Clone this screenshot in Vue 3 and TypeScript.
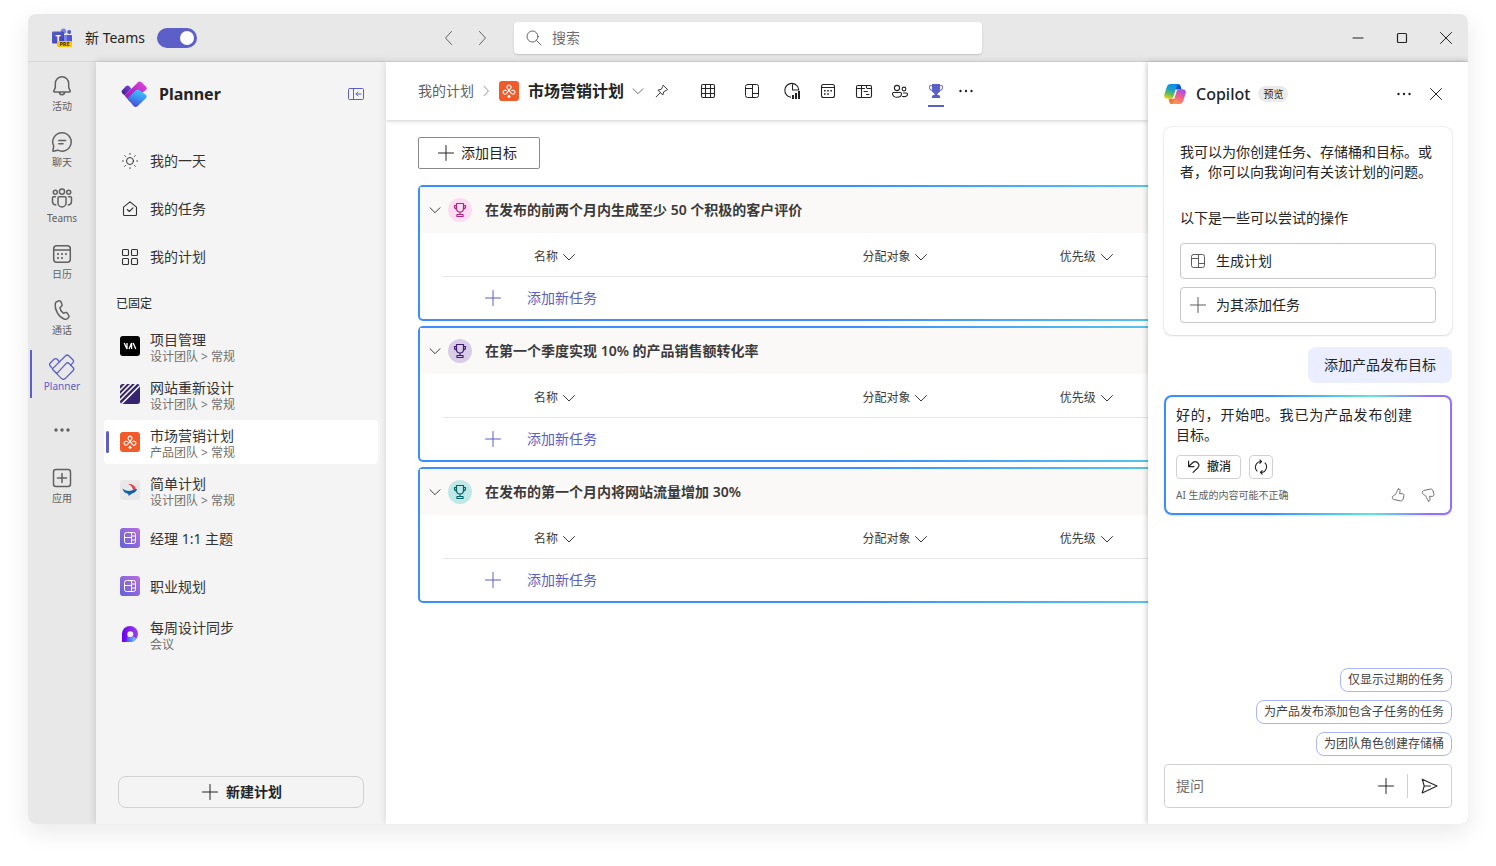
<script setup lang="ts">
import { h, ref } from 'vue'
import type { FunctionalComponent } from 'vue'

interface Glyph {
  box: string
  body: string
}

const line = (body: string, width = 1, box = '0 0 20 20'): Glyph => ({
  box,
  body: `<g fill="none" stroke="currentColor" stroke-width="${width}" stroke-linecap="round" stroke-linejoin="round">${body}</g>`,
})
const rail = (body: string): Glyph => line(body, 1.5, '0 0 24 24')
const art = (body: string, box = '0 0 20 20'): Glyph => ({ box, body })

const trophyCup = 'M6.5 3.5h7v5a3.5 3.5 0 0 1-7 0z'
const plannerBar = 'M3.6 14.6 16.6 1.7q1.6-1.4 3.2 0l4 4q1.6 1.6 0 3.2l-2.2 2.2'
const plannerBase = 'M8 19.4 17 9.6q1.6-1.6 3.2 0l3.8 3.9q1.6 1.6 0 3.2l-7.8 7.9q-1.8 1.6-3.6 0L3.6 15.6z'
const plannerLeaf = 'M3.6 14.6 1.3 12.2q-1.4-1.6 0-3.2L5 5.3q1.6-1.4 3.2 0l2.2 2.4'
const copilotRibbon =
  'M6.5 0H14c-1 .6-1.400 1.800-1.800 3.400L9.500 12.500c-.6 1.600-1.500 2.300-3 2.300H3.300C.8 14.800-.3 13 .3 10.500L2.800 3C3.400 1 4.700 0 6.500 0z'

const knot =
  '<path d="M7.400 12.700 11.600 7.400A2 2 0 1 0 8.400 7.400L12.600 12.700A2 2 0 1 0 13.800 9.200L12.800 9.600M7.400 12.700A2 2 0 1 1 6.200 9.200L7.200 9.600" fill="none" stroke="#fff" stroke-width="1.100" stroke-linejoin="round" stroke-linecap="round"/><path d="M10 13.600l1.800 1.800L10 17.200l-1.800-1.800z" fill="#fff"/>'

const glyphs: Record<string, Glyph> = {
  bell: rail('<path d="M12 2.800a6.700 6.700 0 0 0-6.700 6.700v4.200l-1.500 3.100a.8.8 0 0 0 .7 1.200h15a.8.8 0 0 0 .7-1.200l-1.500-3.100V9.500A6.700 6.700 0 0 0 12 2.800zM9.500 18.300a2.500 2.500 0 0 0 5 0"/>'),
  chat: rail('<path d="M12 2.800a9.200 9.200 0 1 1-4.200 17.400l-4.600 1a.4.4 0 0 1-.4-.5l1-4.500A9.200 9.200 0 0 1 12 2.800zM8.800 10.500h6.800M8.800 13.800h4.200"/>'),
  teams: rail('<circle cx="12" cy="5.600" r="2.600"/><circle cx="5.300" cy="6.200" r="2"/><circle cx="18.700" cy="6.200" r="2"/><path d="M9 10.800h6a1 1 0 0 1 1 1V17a4 4 0 0 1-8 0v-5.200a1 1 0 0 1 1-1zM5.500 10.800h-2a1 1 0 0 0-1 1V15.500a3.500 3.500 0 0 0 3.300 3.400M18.500 10.800h2a1 1 0 0 1 1 1V15.500a3.500 3.500 0 0 1-3.300 3.400"/>'),
  calendar: {
    box: '0 0 24 24',
    body: '<g fill="none" stroke="currentColor" stroke-width="1.500"><rect x="3.700" y="3.700" width="16.600" height="16.600" rx="3"/><path d="M3.700 7.900h16.600"/></g><g fill="currentColor"><circle cx="8" cy="12" r="1.100"/><circle cx="12" cy="12" r="1.100"/><circle cx="16" cy="12" r="1.100"/><circle cx="8" cy="16" r="1.100"/><circle cx="12" cy="16" r="1.100"/></g>',
  },
  phone: rail('<path d="M7.700 3.200l1-.3c1-.3 2 .2 2.400 1.200l.8 1.900c.4.800.2 1.800-.5 2.400L9.900 9.700c.2 1.900 1.600 4.300 3.400 5.500l1.800-.6c.9-.3 1.800 0 2.300.8l1.200 1.700c.6.800.5 1.900-.2 2.600l-.8.800c-.9.800-2.100 1-3.200.700C8.800 19.300 4.600 12.200 5.200 6c.1-1.300 1.200-2.400 2.500-2.800z"/>'),
  planner: line(`<path d="${plannerBar}"/><path d="${plannerBase}"/><path d="${plannerLeaf}"/>`, 1.3, '0 0 26 26'),
  dots: art('<g fill="currentColor"><circle cx="6" cy="12" r="1.700"/><circle cx="12" cy="12" r="1.700"/><circle cx="18" cy="12" r="1.700"/></g>', '0 0 24 24'),
  apps: rail('<rect x="3.500" y="3.500" width="17" height="17" rx="2.500"/><path d="M12 7.500v9M7.500 12h9"/>'),
  more: art('<g fill="currentColor"><circle cx="4.500" cy="10" r="1.200"/><circle cx="10" cy="10" r="1.200"/><circle cx="15.500" cy="10" r="1.200"/></g>'),
  sun: line('<circle cx="10" cy="10" r="3.500"/><path d="M10 2.500v.8M10 16.700v.8M2.500 10h.8M16.700 10h.8M4.700 4.700l.8.8M14.500 14.500l.8.8M4.700 15.300l.8-.8M14.500 5.500l.8-.8"/>'),
  home: line('<path d="M3.500 8.200 10 2.800l6.500 5.400v7.300a1 1 0 0 1-1 1h-11a1 1 0 0 1-1-1zM7.300 10.500l2 2 3.700-3.700"/>', 1.1),
  squares: line('<rect x="2.500" y="2.500" width="6" height="6" rx="1"/><rect x="11.500" y="2.500" width="6" height="6" rx="1"/><rect x="2.500" y="11.500" width="6" height="6" rx="1"/><rect x="11.500" y="11.500" width="6" height="6" rx="1"/>', 1.1),
  collapse: line('<rect x="2.500" y="4.500" width="15" height="11" rx="1"/><path d="M7.500 4.500v11M15 10h-5M12 8l-2 2 2 2"/>'),
  plus: line('<path d="M10 2.500v15M2.500 10h15"/>'),
  down: line('<path d="M4.500 7.500 10 13l5.500-5.500"/>'),
  left: line('<path d="M12.500 3.500 6.500 10l6 6.500"/>'),
  right: line('<path d="M7.500 3.500l6 6.500-6 6.500"/>'),
  search: line('<circle cx="8.500" cy="8.500" r="5.500"/><path d="M12.500 12.500l4.500 4.500"/>'),
  pin: line('<path d="M11.600 3.800l4.600 4.600-1.700 1-2.600 1.500-1 3.600-5.400-5.400 3.600-1 1.500-2.600zM8 12l-4.500 4.500"/>'),
  grid: line('<rect x="3.500" y="3.500" width="13" height="13" rx="1.500"/><path d="M7.500 3.500v13M12.500 3.500v13M3.500 7.500h13M3.500 12.500h13"/>', 1.1),
  board: line('<rect x="3.500" y="3.500" width="13" height="13" rx="2"/><path d="M10.500 3.500v13M3.500 7.500h7M10.500 12.500h6"/>'),
  chart: art('<path d="M9 16.300A7 7 0 1 1 16.800 9H10.500V2.500" fill="none" stroke="currentColor" stroke-width="1.100"/><path d="M10 14h2v4h-2zM13 12h2v6h-2zM16 10h2v8h-2z" fill="currentColor"/>'),
  schedule: art('<rect x="3.500" y="3.500" width="13" height="13" rx="2" fill="none" stroke="currentColor" stroke-width="1.100"/><path d="M3.500 6.500h13" stroke="currentColor"/><path d="M6 9h1.600v1.600H6zM9.200 9h1.600v1.600H9.200zM12.400 9H14v1.600h-1.600zM6 12.200h1.600v1.600H6zM9.200 12.200h1.600v1.600H9.200z" fill="currentColor"/>'),
  timeline: line('<rect x="2.500" y="4.500" width="15" height="12" rx="1.500"/><path d="M7.500 4.500v12M2.500 7.500h8M13 7.500h4.500M10 10.500h3.500M12.500 13.500H15M12.500 4.500v2"/>', 1.1),
  people: line('<circle cx="7" cy="7" r="2.600"/><circle cx="14" cy="8" r="1.900"/><path d="M3.500 11.500h7a1 1 0 0 1 1 1c0 2.500-2 3.800-4.500 3.800s-4.500-1.300-4.500-3.800a1 1 0 0 1 1-1zM13.500 12h3a1 1 0 0 1 1 1c0 1.800-1.500 2.600-3.500 2.600-.6 0-1-.1-1.500-.2"/>', 1.1),
  trophyFill: art('<path d="M6 3h8v7.500l-2.500 2.200V14h1a1.500 1.500 0 0 1 1.500 1.500V17H6v-1.500A1.500 1.500 0 0 1 7.500 14h1v-1.300L6 10.500z" fill="currentColor"/><path d="M6 4.700H4a.5.5 0 0 0-.5.500v1.500A2.700 2.700 0 0 0 6.500 9.400M14 4.700h2a.5.5 0 0 1 .5.500v1.500a2.700 2.700 0 0 1-3 2.700" fill="none" stroke="currentColor"/>'),
  trophy: line(`<path d="${trophyCup}M6.500 5.500h-2v1a2.500 2.500 0 0 0 2.200 2.500M13.500 5.500h2v1A2.500 2.500 0 0 1 13.300 9M10 12v2.500M7 14.500h6v2H7z"/>`, 1.2),
  close: line('<path d="M4.500 4.500l11 11M15.500 4.500l-11 11"/>'),
  minimize: line('<path d="M5 10h10"/>'),
  maximize: line('<rect x="5.500" y="5.500" width="9" height="9" rx="1"/>', 1.2),
  undo: line('<path d="M4 3.500v6h6M4.300 9.200 8.500 5.300a4 4 0 0 1 5.800 5.500L9 16"/>', 1.3),
  refresh: line('<path d="M10.500 4A6.200 6.200 0 0 0 5.600 14.500M9.500 16A6.200 6.200 0 0 0 14.400 5.500M8.700 2l2 2-2 2M11.300 14l-2 2 2 2"/>', 1.2),
  thumbUp: line('<path d="M10.400 3.300c.9-.3 1.900.3 1.900 1.600 0 1.300-.3 2.400-.6 3.600h3.200c1.200 0 2 1.100 1.700 2.200l-1 4c-.4 1.400-1.700 2.200-3.100 1.800L5 14.900a1.500 1.500 0 0 1-1.100-1.200l-.2-.9a1.500 1.500 0 0 1 .9-1.700C7 10 8.400 8 9.200 5.200c.3-1 .5-1.700 1.200-1.900z"/>'),
  thumbDown: line('<path d="M10.400 16.700c.9.300 1.900-.3 1.900-1.600 0-1.300-.3-2.400-.6-3.600h3.200c1.200 0 2-1.100 1.700-2.200l-1-4c-.4-1.400-1.700-2.200-3.100-1.800L5 5.100a1.500 1.500 0 0 0-1.100 1.200l-.2.900a1.500 1.500 0 0 0 .9 1.700C7 10 8.400 12 9.200 14.800c.3 1 .5 1.700 1.200 1.900z"/>'),
  send: line('<path d="M3.200 3.200 18 10 3.200 17l2-7zM5.200 10h6.300"/>', 1.1),
  plannerLogo: art(
    '<defs><linearGradient id="pl-a" x1="0" y1="1" x2="1" y2="0"><stop offset="0" stop-color="#8a1bb4"/><stop offset=".5" stop-color="#b92bc4"/><stop offset="1" stop-color="#e549e0"/></linearGradient><linearGradient id="pl-b" x1=".7" y1="0" x2=".3" y2="1"><stop offset="0" stop-color="#3ccbfb"/><stop offset=".5" stop-color="#3b8ff0"/><stop offset="1" stop-color="#4a3fd6"/></linearGradient><linearGradient id="pl-c" x1="0" y1="1" x2="1" y2="0"><stop offset="0" stop-color="#3b1a86"/><stop offset="1" stop-color="#8646d9"/></linearGradient></defs>' +
      `<path d="${plannerLeaf}z" fill="url(#pl-c)"/><path d="M3.600 14.600 17 1.200q1.800-1.500 3.500 0l4.400 4.200q1.600 1.800 0 3.600L9 21z" fill="url(#pl-a)"/><path d="M6.400 17.600 15 9.200q1.800-1.600 3.500 0l6.400 4.600q1.600 1.600 0 3.400l-8.500 8q-1.800 1.600-3.600 0z" fill="url(#pl-b)"/>`,
    '0 0 26 26',
  ),
  teamsLogo: art(
    '<defs><linearGradient id="tm-a" x1="0" y1="0" x2="1" y2="1"><stop offset="0" stop-color="#5a62c9"/><stop offset="1" stop-color="#3940ab"/></linearGradient></defs><circle cx="11.500" cy="3.200" r="2.700" fill="#7b83eb"/><circle cx="17.200" cy="4" r="2" fill="#5059c9"/><path d="M13 7h6.200a.8.8 0 0 1 .8.8V14h-7z" fill="#5059c9"/><path d="M8 7h7v9H8z" fill="#7b83eb"/><rect x="0" y="3.500" width="12" height="12" rx="1" fill="url(#tm-a)"/><text x="6" y="12.500" text-anchor="middle" font-family="Noto Sans, sans-serif" font-weight="700" font-size="9" fill="#fff">T</text><rect x="5" y="13" width="15" height="6" rx="1" fill="#ffc30b"/><text x="12.500" y="18" text-anchor="middle" font-family="Noto Sans, sans-serif" font-weight="700" font-size="5.500" fill="#3b2f00">PRE</text>',
  ),
  copilotLogo: art(
    '<defs><linearGradient id="cp-a" x1=".6" y1="0" x2=".3" y2="1"><stop offset="0" stop-color="#0c8ff0"/><stop offset=".4" stop-color="#1ca4c0"/><stop offset=".7" stop-color="#6cc04a"/><stop offset="1" stop-color="#f5d020"/></linearGradient><linearGradient id="cp-b" x1=".3" y1="1" x2=".7" y2="0"><stop offset="0" stop-color="#a04ff0"/><stop offset=".5" stop-color="#f0608c"/><stop offset="1" stop-color="#fc9a50"/></linearGradient><linearGradient id="cp-c" x1="0" y1="0" x2="1" y2="1"><stop offset="0" stop-color="#1a6ee0"/><stop offset="1" stop-color="#0a3fb8"/></linearGradient></defs>' +
      `<path d="M11 0h3c1.600 0 2.300 1 2.800 2.600L17.600 5.500H11z" fill="url(#cp-c)"/><path d="${copilotRibbon}" fill="url(#cp-a)"/><path d="M11 20H8c-1.600 0-2.300-1-2.800-2.600L4.600 14.800H11z" fill="#f07a3a"/><path d="${copilotRibbon}" fill="url(#cp-b)" transform="rotate(180 11 10)"/>`,
    '0 0 22 20',
  ),
  projects: art('<rect width="20" height="20" rx="3" fill="#000"/><path d="M4.200 7 7 13V7M9 13l2.600-6v6M13.200 7l2.600 6" fill="none" stroke="#fff" stroke-width="1.300"/>'),
  website: art('<defs><clipPath id="ws"><rect width="20" height="20" rx="3"/></clipPath></defs><g clip-path="url(#ws)"><rect width="20" height="20" fill="#36246e"/><path d="M-1 7 7-1M-1 12 12-1M-1 17 17-1M-1 22.500 22.500-1" stroke="#fff" stroke-width="1.500"/></g>'),
  marketing: art(`<rect width="20" height="20" rx="3" fill="#f25a29"/>${knot}`),
  simple: art('<rect width="20" height="20" rx="3" fill="#e8e8e8"/><path d="M2.500 8.500c2 1.800 5 2.800 8 2.300 2-.3 3.300-1 4.500-1.800h2c-.4 2.400-2.400 3.600-4.500 4.200l-3.700 2.600c-.8-.3-.5-1-.2-1.800C5.500 13.500 3 11.500 2.500 8.500z" fill="#0e5fa8"/><path d="M8.300 4c3.700-.2 7 1.500 7.500 4.900l-2.800 1.300c-.3-2.800-2-4.700-4.700-6.200z" fill="#ee3e4b"/>'),
  topic: art('<defs><linearGradient id="tp" x1="1" y1="0" x2="0" y2="1"><stop offset="0" stop-color="#b96ede"/><stop offset="1" stop-color="#5f63d8"/></linearGradient></defs><rect width="20" height="20" rx="3" fill="url(#tp)"/><g fill="none" stroke="#fff"><rect x="4.500" y="4.500" width="11" height="11" rx="2"/><path d="M11.500 4.500v11M4.500 9.500h7M11.500 8h4M11.500 12h4"/></g>'),
  loop: art('<defs><linearGradient id="lp" x1="0" y1="0" x2="1" y2="0"><stop offset="0" stop-color="#6a00f0"/><stop offset="1" stop-color="#9a45e6"/></linearGradient><linearGradient id="lq" x1="0" y1="0" x2="1" y2="0"><stop offset="0" stop-color="#5a3cf5"/><stop offset="1" stop-color="#5ee0fb"/></linearGradient></defs><path d="M10 2a8 8 0 0 1 8 8 8 8 0 0 1-8 8H2v-8a8 8 0 0 1 8-8z" fill="url(#lp)"/><path d="M7.500 11.500c.5 1.500 1.500 2 3 2 1.500 0 2.500-.4 3.200-1l2.600 2.500A8 8 0 0 1 10 18H6z" fill="url(#lq)"/><circle cx="10.300" cy="10.300" r="3" fill="#f4f4f4"/>'),
}

const Icon: FunctionalComponent<{ name: string; size?: number }> = (props) => {
  const g = glyphs[props.name]
  const size = props.size ?? 20
  return h('svg', {
    class: 'icon',
    viewBox: g.box,
    width: size,
    height: size,
    'aria-hidden': 'true',
    innerHTML: g.body,
  })
}
Icon.props = ['name', 'size']

const newTeams = ref(true)
const query = ref('')
const prompt = ref('')

const railItems = [
  { icon: 'bell', label: '活动' },
  { icon: 'chat', label: '聊天' },
  { icon: 'teams', label: 'Teams' },
  { icon: 'calendar', label: '日历' },
  { icon: 'phone', label: '通话' },
  { icon: 'planner', label: 'Planner', active: true },
  { icon: 'dots', label: '' },
  { icon: 'apps', label: '应用' },
]

const shortcuts = [
  { icon: 'sun', label: '我的一天' },
  { icon: 'home', label: '我的任务' },
  { icon: 'squares', label: '我的计划' },
]

const pinned = [
  { icon: 'projects', title: '项目管理', sub: '设计团队 > 常规' },
  { icon: 'website', title: '网站重新设计', sub: '设计团队 > 常规' },
  { icon: 'marketing', title: '市场营销计划', sub: '产品团队 > 常规', active: true },
  { icon: 'simple', title: '简单计划', sub: '设计团队 > 常规' },
  { icon: 'topic', title: '经理 1:1 主题' },
  { icon: 'topic', title: '职业规划' },
  { icon: 'loop', title: '每周设计同步', sub: '会议' },
]

const views = [
  { icon: 'grid', label: '网格' },
  { icon: 'board', label: '板' },
  { icon: 'chart', label: '图表' },
  { icon: 'schedule', label: '日程' },
  { icon: 'timeline', label: '时间线' },
  { icon: 'people', label: '人员' },
  { icon: 'trophyFill', label: '目标', active: true },
]

const columns = ['名称', '分配对象', '优先级']

const goals = [
  { title: '在发布的前两个月内生成至少 50 个积极的客户评价', tone: 'pink' },
  { title: '在第一个季度实现 10% 的产品销售额转化率', tone: 'violet' },
  { title: '在发布的第一个月内将网站流量增加 30%', tone: 'teal' },
]

const suggestions = ['仅显示过期的任务', '为产品发布添加包含子任务的任务', '为团队角色创建存储桶']
</script>

<template>
  <div class="desktop">
    <div class="window">
      <header class="titlebar">
        <div class="title-left">
          <Icon name="teamsLogo" />
          <label class="switch-label">
            <span>新 Teams</span>
            <input v-model="newTeams" type="checkbox" role="switch" class="switch" />
          </label>
          <div class="history">
            <button type="button" aria-label="后退"><Icon name="left" /></button>
            <button type="button" aria-label="前进"><Icon name="right" /></button>
          </div>
        </div>
        <label class="search">
          <Icon name="search" />
          <input v-model="query" type="search" placeholder="搜索" aria-label="搜索" />
        </label>
        <div class="window-buttons">
          <button type="button" aria-label="最小化"><Icon name="minimize" /></button>
          <button type="button" aria-label="最大化"><Icon name="maximize" /></button>
          <button type="button" aria-label="关闭"><Icon name="close" /></button>
        </div>
      </header>

      <div class="body">
        <nav class="rail" aria-label="应用">
          <button
            v-for="item in railItems"
            :key="item.icon"
            type="button"
            class="rail-item"
            :class="{ active: item.active, compact: !item.label }"
            :aria-label="item.label || '更多'"
          >
            <Icon :name="item.icon" :size="item.active ? 26 : 24" />
            <span v-if="item.label">{{ item.label }}</span>
          </button>
        </nav>

        <aside class="sidebar">
          <div class="side-head">
            <Icon name="plannerLogo" :size="26" />
            <h1>Planner</h1>
            <button type="button" class="collapse" aria-label="折叠"><Icon name="collapse" /></button>
          </div>
          <ul class="shortcuts">
            <li v-for="s in shortcuts" :key="s.label">
              <button type="button" class="side-item"><Icon :name="s.icon" />{{ s.label }}</button>
            </li>
          </ul>
          <h2>已固定</h2>
          <ul class="pinned">
            <li v-for="p in pinned" :key="p.title">
              <button type="button" class="side-item" :class="{ active: p.active }">
                <Icon :name="p.icon" />
                <span class="side-text" :class="{ double: p.sub }">
                  <span class="side-title">{{ p.title }}</span>
                  <span v-if="p.sub" class="side-sub">{{ p.sub }}</span>
                </span>
              </button>
            </li>
          </ul>
          <button type="button" class="new-plan"><Icon name="plus" />新建计划</button>
        </aside>

        <main class="main">
          <div class="plan-bar">
            <a href="#" class="crumb">我的计划</a>
            <Icon name="right" :size="14" class="crumb-sep" />
            <Icon name="marketing" />
            <h2>市场营销计划</h2>
            <button type="button" class="bare menu" aria-label="计划菜单"><Icon name="down" :size="18" /></button>
            <button type="button" class="bare" aria-label="固定"><Icon name="pin" :size="18" /></button>
            <div class="views">
              <button
                v-for="v in views"
                :key="v.icon"
                type="button"
                class="view"
                :class="{ active: v.active }"
                :aria-label="v.label"
              >
                <Icon :name="v.icon" />
              </button>
              <button type="button" class="bare" aria-label="更多"><Icon name="more" /></button>
            </div>
          </div>

          <div class="content">
            <button type="button" class="add-goal"><Icon name="plus" />添加目标</button>
            <div class="goals">
              <section v-for="goal in goals" :key="goal.title" class="goal">
                <div class="goal-head">
                  <button type="button" class="bare" aria-label="折叠目标"><Icon name="down" :size="18" /></button>
                  <span class="badge" :class="goal.tone"><Icon name="trophy" /></span>
                  <h3>{{ goal.title }}</h3>
                </div>
                <table>
                  <thead>
                    <tr>
                      <th v-for="c in columns" :key="c" scope="col">
                        <button type="button">{{ c }}<Icon name="down" /></button>
                      </th>
                    </tr>
                  </thead>
                  <tbody>
                    <tr>
                      <td colspan="3">
                        <button type="button" class="add-task"><Icon name="plus" />添加新任务</button>
                      </td>
                    </tr>
                  </tbody>
                </table>
              </section>
            </div>
          </div>
        </main>

        <aside class="copilot">
          <div class="cp-head">
            <Icon name="copilotLogo" :size="22" />
            <h2>Copilot</h2>
            <span class="tag">预览</span>
            <div class="cp-actions">
              <button type="button" aria-label="更多"><Icon name="more" /></button>
              <button type="button" aria-label="关闭"><Icon name="close" /></button>
            </div>
          </div>
          <div class="chat">
            <div class="intro">
              <p>我可以为你创建任务、存储桶和目标。或者，你可以向我询问有关该计划的问题。</p>
              <p class="hint">以下是一些可以尝试的操作</p>
              <button type="button" class="option"><Icon name="board" />生成计划</button>
              <button type="button" class="option"><Icon name="plus" />为其添加任务</button>
            </div>
            <p class="mine">添加产品发布目标</p>
            <div class="answer">
              <p>好的，开始吧。我已为产品发布创建目标。</p>
              <div class="answer-actions">
                <button type="button" class="undo"><Icon name="undo" :size="18" />撤消</button>
                <button type="button" class="redo" aria-label="重新生成"><Icon name="refresh" :size="18" /></button>
              </div>
              <div class="answer-foot">
                <small>AI 生成的内容可能不正确</small>
                <button type="button" class="bare" aria-label="喜欢"><Icon name="thumbUp" :size="18" /></button>
                <button type="button" class="bare" aria-label="不喜欢"><Icon name="thumbDown" :size="18" /></button>
              </div>
            </div>
          </div>
          <div class="chips">
            <button v-for="s in suggestions" :key="s" type="button">{{ s }}</button>
          </div>
          <form class="ask" @submit.prevent>
            <input v-model="prompt" type="text" placeholder="提问" aria-label="提问" />
            <button type="button" aria-label="添加"><Icon name="plus" /></button>
            <button type="submit" class="send" aria-label="发送"><Icon name="send" /></button>
          </form>
        </aside>
      </div>
    </div>
  </div>
</template>

<style>
body {
  background: #fff;
}
</style>

<style scoped>
* {
  box-sizing: border-box;
}
.desktop {
  display: flex;
  min-height: 100vh;
  padding: 14px 28px 42px;
  font-family: 'Noto Sans', 'Noto Sans CJK SC', sans-serif;
  font-size: 14px;
  line-height: 20px;
  color: #242424;
}
h1,
h2,
h3,
p,
ul {
  margin: 0;
  padding: 0;
  list-style: none;
}
button,
input {
  margin: 0;
  padding: 0;
  border: 0;
  background: none;
  font: inherit;
  color: inherit;
}
button {
  display: flex;
  align-items: center;
  justify-content: center;
  white-space: nowrap;
}
.icon {
  display: block;
  flex: none;
}
.window {
  flex: 1;
  min-width: 0;
  display: flex;
  flex-direction: column;
  overflow: hidden;
  border-radius: 8px;
  box-shadow: 0 8px 24px rgba(0, 0, 0, 0.09);
}

.titlebar {
  display: grid;
  grid-template-columns: 1fr minmax(0, 468px) 1fr;
  align-items: center;
  height: 48px;
  background: #e8e8e8;
  border-bottom: 1px solid #d6d6d6;
}
.title-left {
  display: flex;
  align-items: center;
  padding: 0 16px 0 24px;
}
.switch-label {
  display: flex;
  align-items: center;
  gap: 12px;
  margin-left: 13px;
}
.switch {
  appearance: none;
  display: flex;
  align-items: center;
  justify-content: flex-end;
  width: 40px;
  height: 20px;
  padding: 0 3px;
  border-radius: 10px;
  background: #5b5fc7;
}
.switch::before {
  content: '';
  width: 14px;
  height: 14px;
  border-radius: 50%;
  background: #fff;
}
.switch:not(:checked) {
  justify-content: flex-start;
  background: #8a8a8a;
}
.history {
  display: flex;
  margin-left: auto;
  color: #616161;
}
.history button {
  width: 33px;
  height: 32px;
}
.search {
  display: flex;
  align-items: center;
  gap: 8px;
  height: 32px;
  padding: 0 10px;
  border-radius: 4px;
  background: #fff;
  box-shadow: 0 1px 2px rgba(0, 0, 0, 0.16);
  color: #616161;
}
.search input {
  flex: 1;
  min-width: 0;
  outline: 0;
}
input::placeholder {
  color: #707070;
  opacity: 1;
}
.window-buttons {
  display: flex;
  justify-content: flex-end;
}
.window-buttons button {
  width: 44px;
  height: 44px;
}

.body {
  flex: 1;
  display: flex;
  min-height: 0;
}
.rail {
  flex: none;
  width: 68px;
  padding-top: 6px;
  background: #e8e8e8;
  color: #616161;
}
.rail-item {
  position: relative;
  flex-direction: column;
  justify-content: flex-start;
  gap: 2px;
  width: 100%;
  height: 56px;
  padding-top: 6px;
  font-size: 10px;
  line-height: 12px;
}
.rail-item.compact {
  padding-top: 14px;
}
.rail-item.active {
  gap: 0;
  color: #5b5fc7;
}
.rail-item.active::before {
  content: '';
  position: absolute;
  left: 2px;
  top: 2px;
  width: 2px;
  height: 48px;
  background: #5b5fc7;
}

.sidebar {
  flex: none;
  z-index: 1;
  display: flex;
  flex-direction: column;
  width: 290px;
  padding: 16px 8px;
  background: #f4f4f4;
  box-shadow: 0 0 8px rgba(0, 0, 0, 0.16);
}
.side-head {
  display: flex;
  align-items: center;
  height: 32px;
  padding: 0 12px 0 17px;
}
.side-head h1 {
  margin-left: 12px;
  font-size: 16px;
  font-weight: 700;
}
.collapse {
  margin-left: auto;
  color: #5b5fc7;
}
.shortcuts {
  padding-top: 29px;
}
.shortcuts li,
.pinned li {
  padding-bottom: 4px;
}
.side-item {
  position: relative;
  justify-content: flex-start;
  gap: 10px;
  width: 100%;
  height: 44px;
  padding-left: 16px;
  border-radius: 4px;
  text-align: left;
  color: #333;
}
.side-item.active {
  background: #fff;
}
.side-item.active::before {
  content: '';
  position: absolute;
  left: 2px;
  top: 11px;
  width: 3px;
  height: 22px;
  border-radius: 2px;
  background: #5b5fc7;
}
.sidebar h2 {
  padding: 11px 12px 10px;
  font-size: 12px;
  line-height: 20px;
  font-weight: 400;
}
.side-text {
  display: flex;
  flex-direction: column;
}
.side-text.double {
  padding-top: 3px;
}
.side-title {
  line-height: 17px;
}
.side-sub {
  font-size: 12px;
  line-height: 17px;
  color: #707070;
}
.new-plan {
  gap: 6px;
  height: 32px;
  margin: auto 14px 0;
  border: 1px solid #d1d1d1;
  border-radius: 8px;
  font-weight: 700;
}

.main {
  flex: 1;
  z-index: 2;
  min-width: 0;
  overflow: hidden;
  background: #fff;
  box-shadow: 0 0 8px rgba(0, 0, 0, 0.12);
}
.plan-bar {
  display: flex;
  align-items: center;
  height: 58px;
  padding-left: 32px;
  box-shadow: 0 1px 4px rgba(0, 0, 0, 0.2);
}
.crumb {
  color: #616161;
  text-decoration: none;
  white-space: nowrap;
}
.crumb-sep {
  margin: 0 6px 0 5px;
  color: #616161;
}
.plan-bar h2 {
  margin-left: 9px;
  font-size: 16px;
  font-weight: 700;
  white-space: nowrap;
}
.bare {
  width: 24px;
  height: 24px;
}
.menu {
  margin-left: 2px;
  color: #616161;
}
.views {
  display: flex;
  align-items: center;
  margin-left: 16px;
}
.view {
  position: relative;
  width: 36px;
  height: 32px;
}
.view:nth-child(1) {
  margin-right: 8px;
}
.view:nth-child(2) {
  margin-right: 4px;
}
.view.active {
  color: #5b5fc7;
}
.view.active::after {
  content: '';
  position: absolute;
  left: 10px;
  right: 10px;
  bottom: 0;
  height: 2px;
  background: #5b5fc7;
}
.content {
  padding: 17px 0 0 32px;
}
.add-goal {
  justify-content: flex-start;
  gap: 5px;
  width: 122px;
  height: 32px;
  padding-left: 17px;
  border: 1px solid #8a8a8a;
  border-radius: 2px;
}
.goals {
  display: flex;
  flex-direction: column;
  gap: 5px;
  margin-top: 16px;
}
.goal {
  border: 2px solid transparent;
  border-right: 0;
  border-radius: 5px 0 0 5px;
  background:
    linear-gradient(#fff, #fff) padding-box,
    linear-gradient(90deg, #3b8eff 0, #3b8eff 60%, #55c4ea 100%) border-box;
}
.goal-head {
  display: flex;
  align-items: center;
  height: 46px;
  padding-left: 3px;
  background: #faf9f8;
}
.goal-head h3 {
  margin-left: 13px;
  font-size: 14px;
  font-weight: 600;
  color: #3b3a39;
}
.badge {
  display: flex;
  align-items: center;
  justify-content: center;
  width: 24px;
  height: 24px;
  margin-left: 1px;
  border-radius: 50%;
}
.pink {
  background: #fbdcf0;
  color: #b4237f;
}
.violet {
  background: #d9cce8;
  color: #401b6c;
}
.teal {
  background: #bfe8e6;
  color: #026467;
}
table {
  width: calc(100% - 23px);
  margin-left: 23px;
  border-collapse: collapse;
  table-layout: fixed;
}
th {
  width: 28%;
  height: 43px;
  padding: 6px 0 0;
  border-bottom: 1px solid #e6e6e6;
  font-size: 12px;
  font-weight: 400;
  color: #3b3a39;
}
th button {
  gap: 1px;
}
th:first-child {
  width: 59.5%;
  padding-left: 91px;
}
th:last-child {
  width: auto;
}
td {
  height: 43px;
  padding: 0 0 0 40px;
}
.add-task {
  gap: 24px;
  color: #5b5fc7;
}

.copilot {
  flex: none;
  z-index: 3;
  display: flex;
  flex-direction: column;
  width: 320px;
  padding: 16px;
  background: #fff;
  box-shadow: 0 0 6px rgba(0, 0, 0, 0.3);
}
.cp-head {
  display: flex;
  align-items: center;
  height: 32px;
}
.cp-head h2 {
  margin: 0 8px 0 10px;
  font-size: 16px;
  font-weight: 500;
}
.tag {
  padding: 0 5px;
  border-radius: 8px;
  background: #ebebeb;
  font-size: 10px;
  line-height: 16px;
}
.cp-actions {
  display: flex;
  margin-left: auto;
}
.cp-actions button {
  width: 32px;
  height: 32px;
}
.chat {
  display: flex;
  flex-direction: column;
  gap: 12px;
  padding-top: 17px;
}
.intro {
  padding: 15px 16px 12px;
  border-radius: 8px;
  box-shadow: 0 0 2px rgba(0, 0, 0, 0.18), 0 1px 2px rgba(0, 0, 0, 0.1);
}
.hint {
  margin: 26px 0 15px;
}
.option {
  justify-content: flex-start;
  gap: 8px;
  width: 100%;
  height: 36px;
  padding-left: 7px;
  border: 1px solid #c7c7c7;
  border-radius: 4px;
}
.option .icon {
  color: #5c5c5c;
}
.option + .option {
  margin-top: 8px;
}
.mine {
  align-self: flex-end;
  padding: 8px 16px;
  border-radius: 8px;
  background: #ebeeff;
}
.answer {
  padding: 8px 10px 6px;
  border: 2px solid transparent;
  border-radius: 8px;
  background:
    linear-gradient(#fff, #fff) padding-box,
    linear-gradient(90deg, #3b8eff 0, #3b8eff 36%, #64e3de 72%, #9470ff 92%) border-box;
  box-shadow: 0 1px 2px rgba(0, 0, 0, 0.12);
}
.answer p {
  padding-right: 28px;
  text-align: justify;
}
.answer-actions {
  display: flex;
  gap: 8px;
  margin-top: 10px;
}
.undo,
.redo {
  height: 24px;
  border: 1px solid #d1d1d1;
  border-radius: 4px;
  font-size: 12px;
  font-weight: 500;
}
.undo {
  gap: 4px;
  padding: 0 9px 0 8px;
}
.redo {
  width: 24px;
}
.answer-foot {
  display: flex;
  align-items: center;
  gap: 6px;
  margin-top: 4px;
  color: #616161;
}
.answer-foot small {
  margin-right: auto;
  font-size: 10px;
}
.chips {
  display: flex;
  flex-direction: column;
  align-items: flex-end;
  gap: 8px;
  margin-top: auto;
}
.chips button {
  height: 24px;
  padding: 0 7px;
  border: 1px solid #aab4fa;
  border-radius: 8px;
  font-size: 12px;
  color: #424242;
}
.ask {
  display: flex;
  align-items: center;
  height: 44px;
  margin-top: 8px;
  padding: 0 2px 0 11px;
  border: 1px solid #d1d1d1;
  border-radius: 4px;
}
.ask input {
  flex: 1;
  min-width: 0;
  outline: 0;
}
.ask button {
  width: 42px;
  height: 24px;
}
.ask .send {
  border-left: 1px solid #d1d1d1;
}
</style>
